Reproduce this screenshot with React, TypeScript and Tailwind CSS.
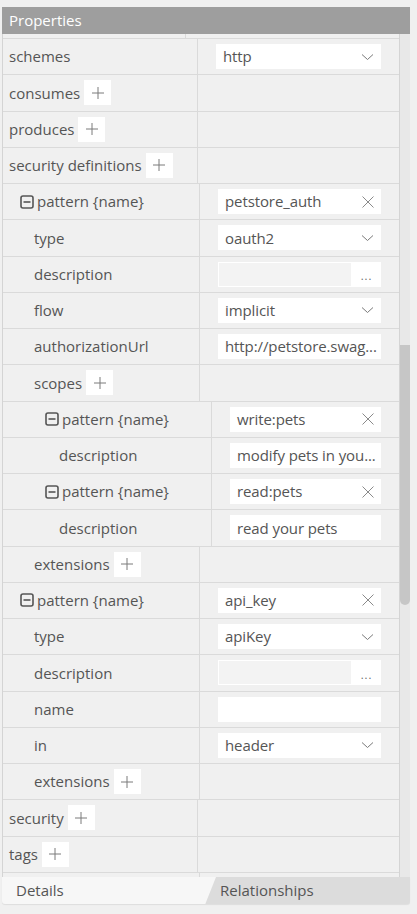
import React from "react";

type Kind = "select" | "clear" | "text" | "dots" | "blank" | "none";

type Row = {
  label: string;
  left: string; // width of the label cell
  pad: string; // label indent
  kind: Kind;
  value?: string;
  plus?: boolean;
  minus?: boolean;
};

const TOP = "w-[195px]";
const MID = "w-[197px]";
const DEEP = "w-[209px]";

const rows: Row[] = [
  { label: "schemes", left: TOP, pad: "pl-[6px]", kind: "select", value: "http" },
  { label: "consumes", left: TOP, pad: "pl-[6px]", kind: "none", plus: true },
  { label: "produces", left: TOP, pad: "pl-[6px]", kind: "none", plus: true },
  { label: "security definitions", left: TOP, pad: "pl-[6px]", kind: "none", plus: true },
  { label: "pattern {name}", left: MID, pad: "pl-[17px]", kind: "clear", value: "petstore_auth", minus: true },
  { label: "type", left: MID, pad: "pl-[31px]", kind: "select", value: "oauth2" },
  { label: "description", left: MID, pad: "pl-[31px]", kind: "dots" },
  { label: "flow", left: MID, pad: "pl-[31px]", kind: "select", value: "implicit" },
  { label: "authorizationUrl", left: MID, pad: "pl-[31px]", kind: "text", value: "http://petstore.swag..." },
  { label: "scopes", left: MID, pad: "pl-[31px]", kind: "none", plus: true },
  { label: "pattern {name}", left: DEEP, pad: "pl-[42px]", kind: "clear", value: "write:pets", minus: true },
  { label: "description", left: DEEP, pad: "pl-[56px]", kind: "text", value: "modify pets in you..." },
  { label: "pattern {name}", left: DEEP, pad: "pl-[42px]", kind: "clear", value: "read:pets", minus: true },
  { label: "description", left: DEEP, pad: "pl-[56px]", kind: "text", value: "read your pets" },
  { label: "extensions", left: MID, pad: "pl-[31px]", kind: "none", plus: true },
  { label: "pattern {name}", left: MID, pad: "pl-[17px]", kind: "clear", value: "api_key", minus: true },
  { label: "type", left: MID, pad: "pl-[31px]", kind: "select", value: "apiKey" },
  { label: "description", left: MID, pad: "pl-[31px]", kind: "dots" },
  { label: "name", left: MID, pad: "pl-[31px]", kind: "blank" },
  { label: "in", left: MID, pad: "pl-[31px]", kind: "select", value: "header" },
  { label: "extensions", left: MID, pad: "pl-[31px]", kind: "none", plus: true },
  { label: "security", left: TOP, pad: "pl-[6px]", kind: "none", plus: true },
  { label: "tags", left: TOP, pad: "pl-[6px]", kind: "none", plus: true },
];

function Chevron() {
  return (
    <svg width="13" height="8" viewBox="0 0 13 8" className="shrink-0">
      <path d="M1 1.5 L6.5 6.5 L12 1.5" fill="none" stroke="#7a7a7a" strokeWidth="1" />
    </svg>
  );
}

function Cross() {
  return (
    <svg width="12" height="12" viewBox="0 0 12 12" className="shrink-0">
      <path d="M0.5 0.5 L11.5 11.5 M11.5 0.5 L0.5 11.5" fill="none" stroke="#8a8a8a" strokeWidth="1" />
    </svg>
  );
}

function PlusBox() {
  return (
    <span className="ml-[4px] flex h-[25px] w-[27px] items-center justify-center bg-white">
      <svg width="12" height="12" viewBox="0 0 12 12">
        <path d="M6 0 V12 M0 6 H12" fill="none" stroke="#7a7a7a" strokeWidth="1" />
      </svg>
    </span>
  );
}

function MinusBox() {
  return (
    <svg width="14" height="14" viewBox="0 0 14 14" className="mr-[3px] shrink-0">
      <rect x="1" y="1" width="12" height="12" rx="2" fill="none" stroke="#555" strokeWidth="1.6" />
      <path d="M3.5 7 H10.5" stroke="#555" strokeWidth="1.6" />
    </svg>
  );
}

function Value({ row }: { row: Row }) {
  if (row.kind === "none") return null;
  if (row.kind === "dots") {
    return (
      <div className="flex h-[25px] flex-1 bg-white">
        <div className="m-[1px] flex-1 bg-[#f3f3f3]" />
        <div className="flex w-[29px] items-center justify-center pt-[4px] text-[11px] tracking-[1px] text-[#666]">...</div>
      </div>
    );
  }
  return (
    <div className="flex h-[25px] min-w-0 flex-1 items-center bg-white pl-[7px] pr-[7px]">
      <span className="flex-1 whitespace-nowrap tracking-[-0.1px]">{row.value ?? ""}</span>
      {row.kind === "select" && <Chevron />}
      {row.kind === "clear" && <Cross />}
    </div>
  );
}

function PropRow({ row }: { row: Row }) {
  return (
    <div className="flex h-[36.25px] shrink-0 border-b border-[#dadada]">
      <div className={`${row.left} ${row.pad} flex shrink-0 items-center border-r border-[#dadada]`}>
        {row.minus && <MinusBox />}
        <span className="whitespace-nowrap">{row.label}</span>
        {row.plus && <PlusBox />}
      </div>
      <div className="flex min-w-0 flex-1 items-center pl-[18px] pr-[18px]">
        <Value row={row} />
      </div>
    </div>
  );
}

export default function App() {
  return (
    <div
      className="h-[914px] w-[417px] overflow-hidden bg-[#f0f0f0] pt-[7px] pl-[2px] text-[15px] text-[#555]"
      style={{ fontFamily: "'Open Sans', 'Noto Sans', sans-serif" }}
    >
      <div className="flex w-[408px] flex-col">
        <div className="flex h-[27px] items-center bg-[#9e9e9e] pl-[7px] text-white">Properties</div>

        <div className="flex h-[843px]">
          <div className="flex w-[398px] flex-col overflow-hidden border-l border-r border-[#d4d4d4]">
            <div className="flex h-[5px] shrink-0 border-b border-[#dadada]">
              <div className="w-[183px] border-r border-[#dadada]" />
            </div>
            {rows.map((r, i) => (
              <PropRow key={i} row={r} />
            ))}
            <div className="flex h-[10px] shrink-0">
              <div className="w-[197px] border-r border-[#dadada]" />
            </div>
          </div>
          <div className="w-[10px] bg-[#e8e8e8]">
            <div className="mt-[311px] h-[260px] w-[10px] rounded-b-[5px] bg-[#c6c6c6]" />
          </div>
        </div>

        <div className="flex h-[27px] overflow-hidden rounded-b-[3px] bg-[#dcdcdc] shadow-[0_1px_1px_rgba(0,0,0,0.08)]">
          <div className="flex w-[214px] items-center bg-[#f7f7f7] pl-[14px] [clip-path:polygon(0_0,100%_0,95%_100%,0_100%)]">
            Details
          </div>
          <div className="flex items-center pl-[4px]">Relationships</div>
        </div>
      </div>
    </div>
  );
}
